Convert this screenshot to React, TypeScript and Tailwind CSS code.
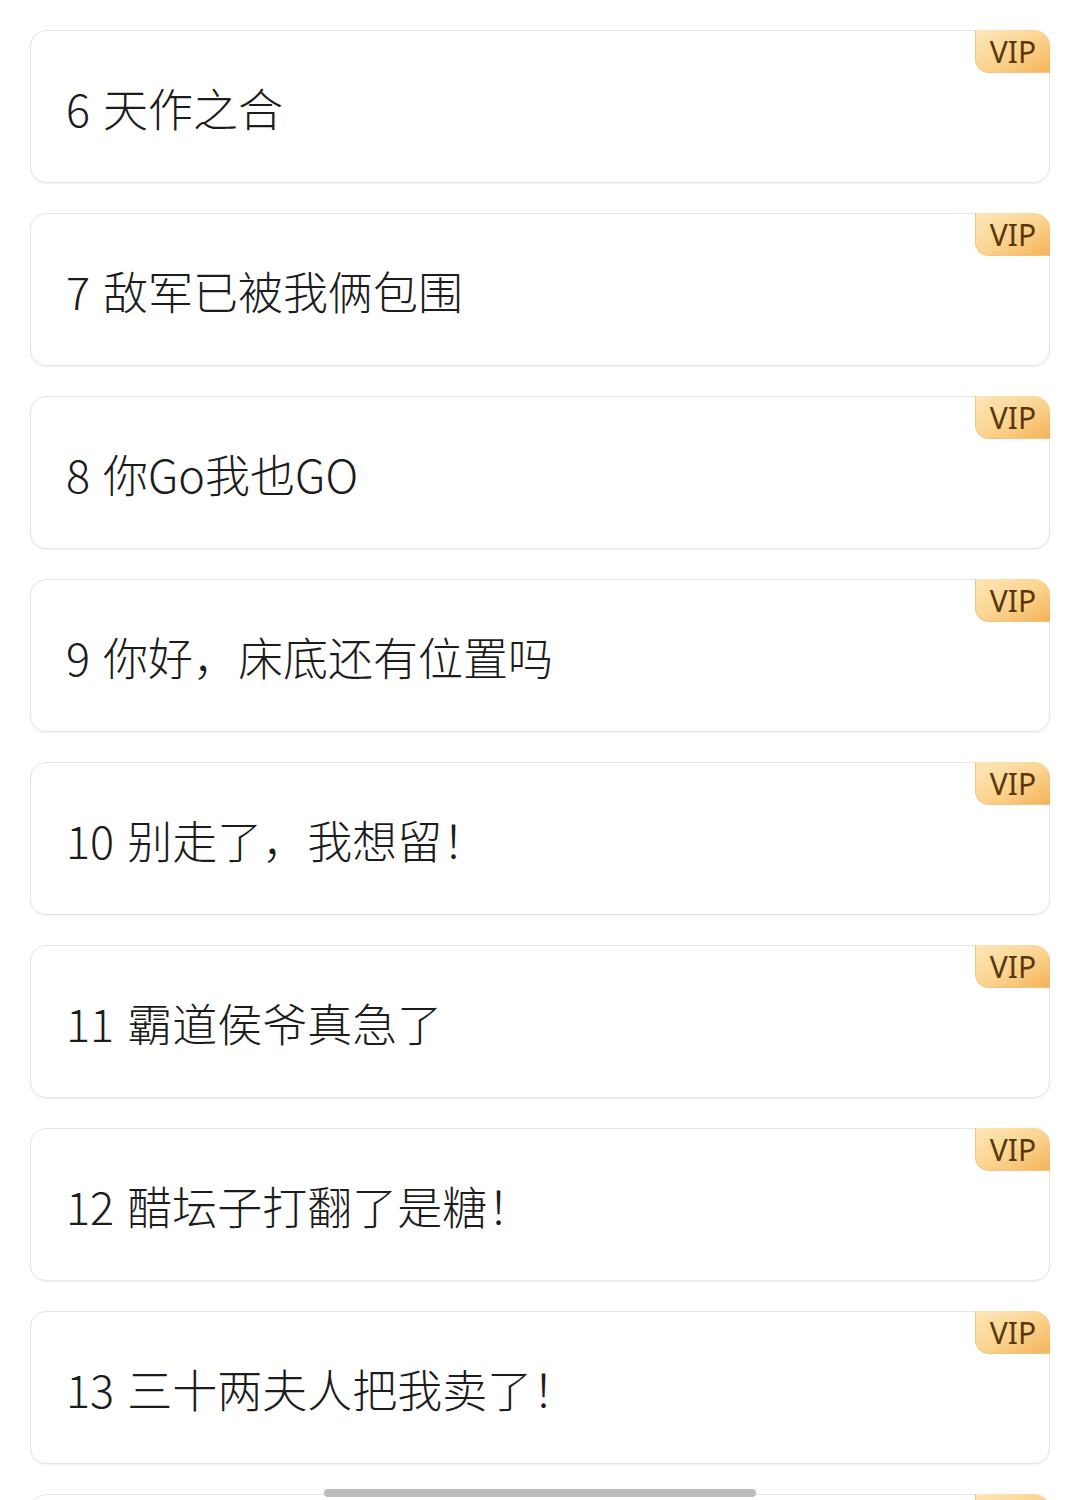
const chapters = [
  "6 天作之合",
  "7 敌军已被我俩包围",
  "8 你Go我也GO",
  "9 你好，床底还有位置吗",
  "10 别走了，我想留！",
  "11 霸道侯爷真急了",
  "12 醋坛子打翻了是糖！",
  "13 三十两夫人把我卖了！",
];

const font = { fontFamily: '"Noto Sans CJK SC", "Noto Sans", sans-serif' };

function VipBadge({ label = true }: { label?: boolean }) {
  return (
    <div className="absolute -top-px -right-px w-[75px] h-[43px] rounded-tr-[16px] rounded-bl-[14px] border-l border-b border-[#ecc684] bg-gradient-to-br from-[#fde6b8] via-[#fbd591] to-[#f5b257] flex items-center justify-center">
      {label && (
        <span
          className="text-[30px] leading-none text-[#5a380c] pt-[1px]"
          style={{ fontFamily: '"Noto Sans", Roboto, sans-serif' }}
        >
          VIP
        </span>
      )}
    </div>
  );
}

function ChapterCard({ title }: { title: string }) {
  const i = title.indexOf(" ");
  const num = title.slice(0, i);
  const name = title.slice(i + 1);
  return (
    <div className="relative h-[153px] shrink-0 rounded-[16px] border border-[#e6e6e6] bg-white shadow-[0_1px_2px_rgba(0,0,0,0.06)] flex items-center pl-[35px] pt-[2px]">
      <span className="text-[45px] font-light text-[#1c1c1c] leading-none" style={font}>
        {num}
      </span>
      <span className="ml-[13px] text-[45px] font-light text-[#1c1c1c] leading-none" style={font}>
        {name}
      </span>
      <VipBadge />
    </div>
  );
}

export default function App() {
  return (
    <div className="relative w-[1080px] h-[1500px] overflow-hidden bg-white">
      <div className="flex flex-col gap-[30px] px-[30px] pt-[30px]">
        {chapters.map((t) => (
          <ChapterCard key={t} title={t} />
        ))}
        {/* next chapter, only its top edge shows */}
        <div className="relative h-[153px] shrink-0 rounded-[16px] border border-[#e6e6e6] bg-white">
          <VipBadge label={false} />
        </div>
      </div>
      <div className="absolute left-[324px] top-[1489px] w-[432px] h-[8px] rounded-full bg-[#bcbcbc]" />
    </div>
  );
}
